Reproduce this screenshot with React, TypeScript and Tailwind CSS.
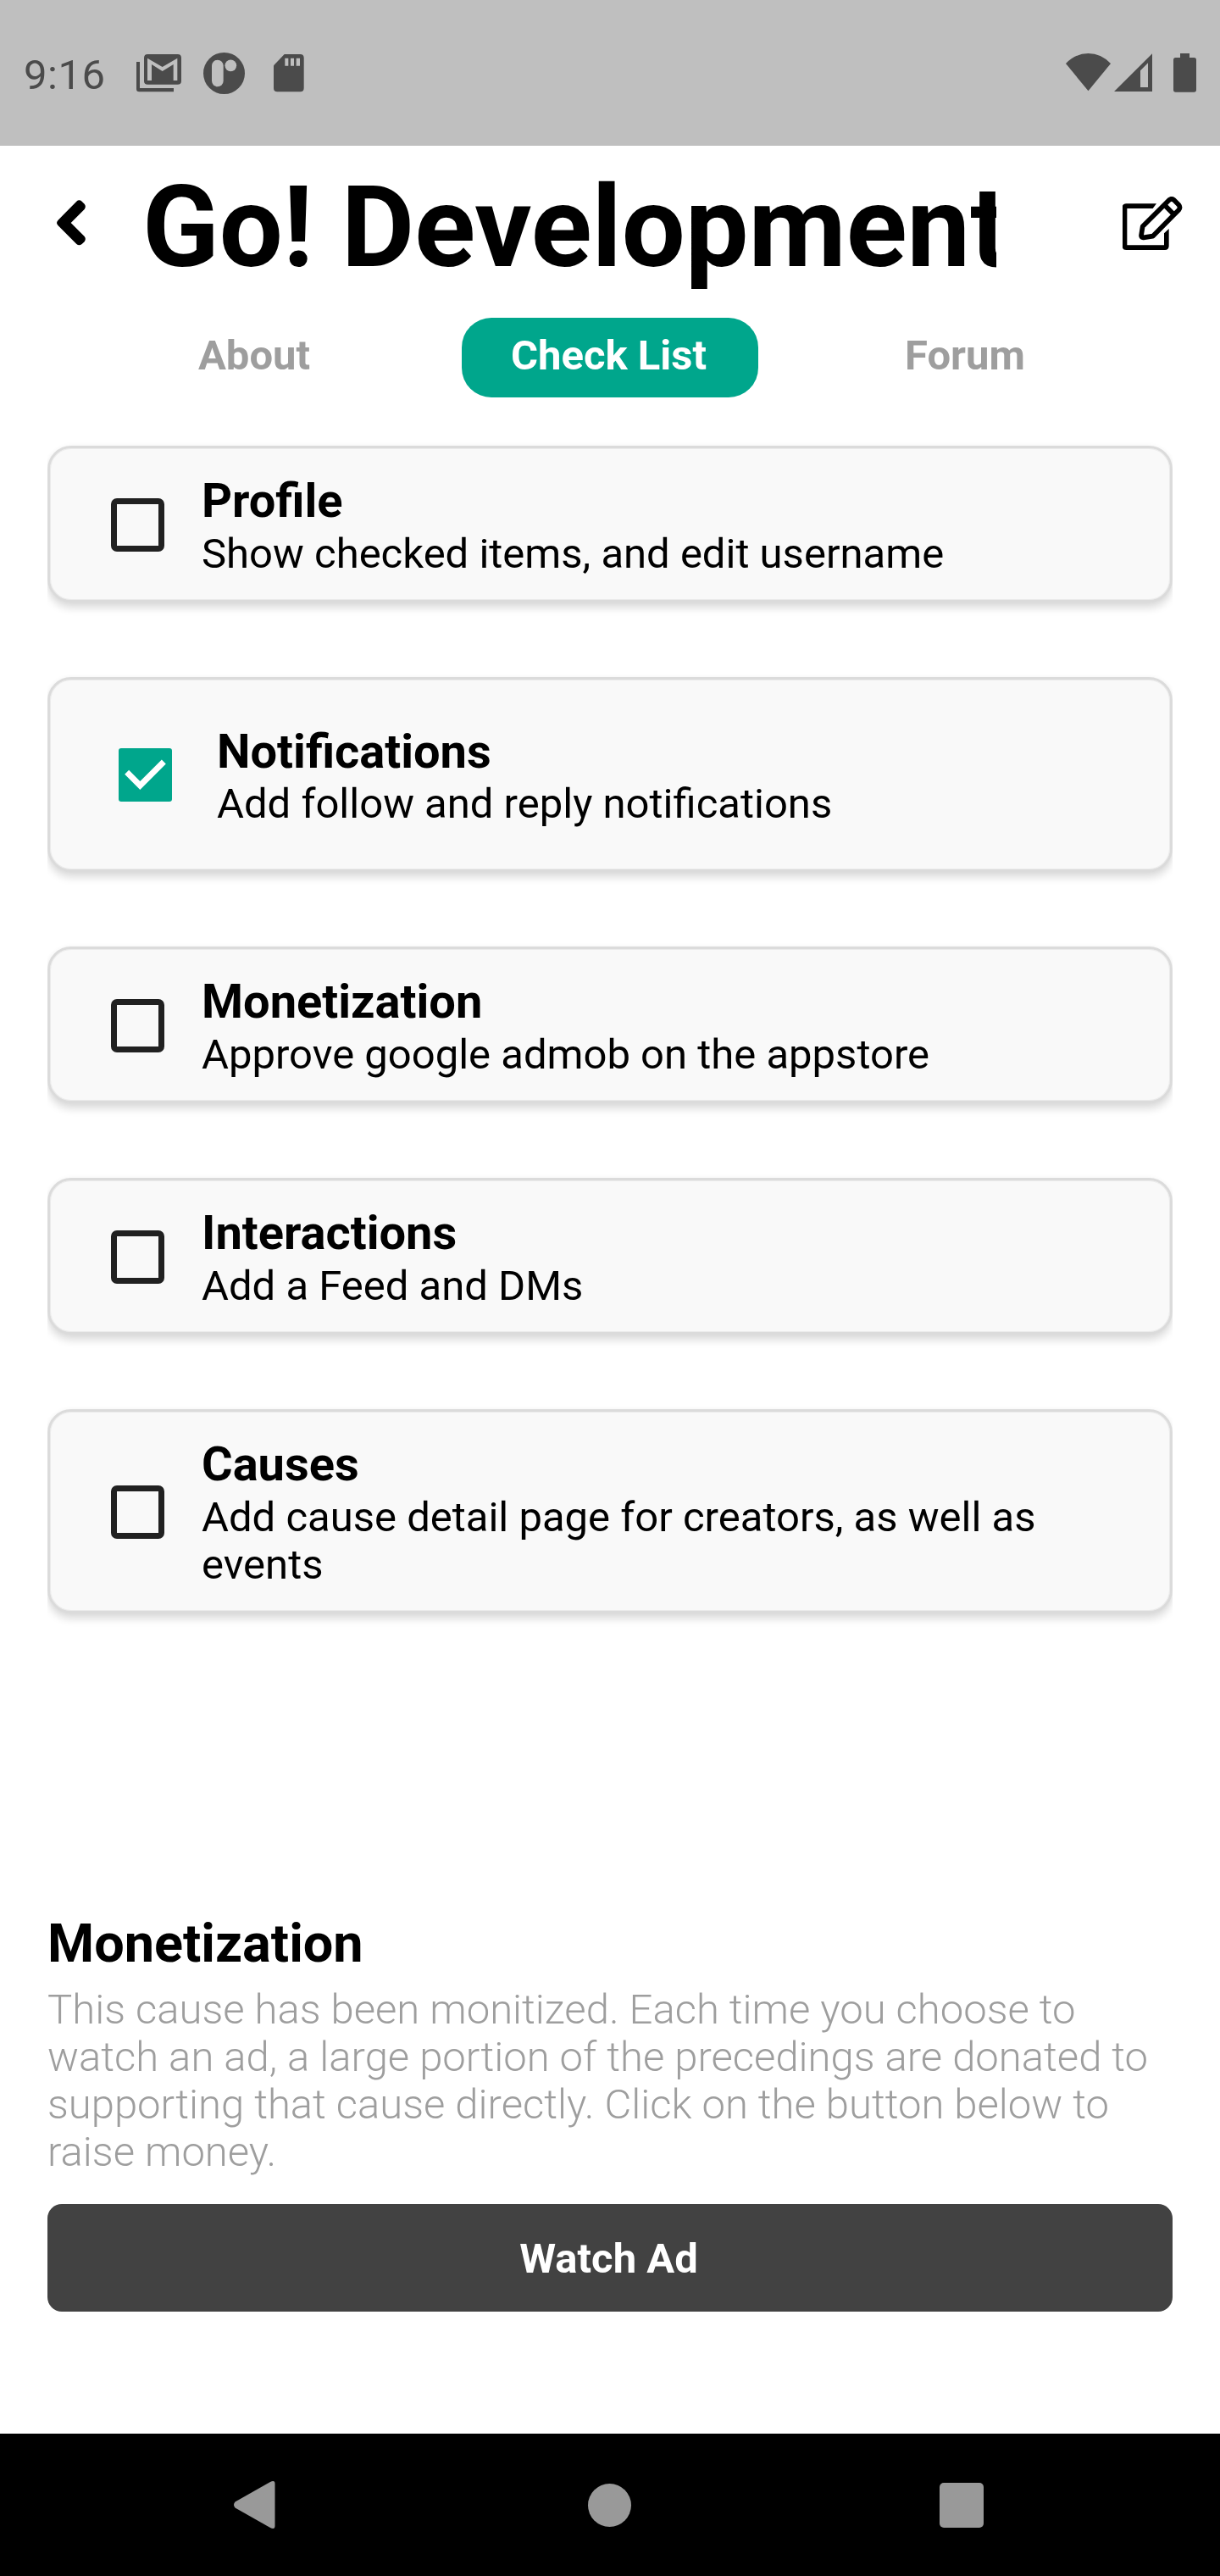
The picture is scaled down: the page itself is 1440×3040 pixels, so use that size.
type Item = { title: string; text: string; checked?: boolean };

const items: Item[] = [
  { title: 'Profile', text: 'Show checked items, and edit username' },
  { title: 'Notifications', text: 'Add follow and reply notifications', checked: true },
  { title: 'Monetization', text: 'Approve google admob on the appstore' },
  { title: 'Interactions', text: 'Add a Feed and DMs' },
  { title: 'Causes', text: 'Add cause detail page for creators, as well as events' },
];

function StatusBar() {
  return (
    <div className="flex h-[172px] items-start justify-between bg-[#bfbfbf] pr-[28px] pl-[28px] pt-[60px] text-[#4b4b4b]">
      <div className="flex items-start">
        <span className="w-[131px] text-[49px] leading-[57px] tracking-[0.5px]">9:16</span>
        <div className="flex pt-[1px]">
          <svg className="mt-[3px] ml-[2px] h-[45px] w-[53px]" viewBox="483 102 159 135" fill="currentColor">
            <path d="M483 129h12v93h120v13H493q-10 0-10-10z" />
            <path fillRule="evenodd" d="M523 102h106q13 0 13 13v82q0 12-13 12H523q-13 0-13-12v-82q0-13 13-13zM522 116v79h15v-57l38 24 39-24v57h14v-79l-53 31z" />
          </svg>
          <svg className="mt-[1px] ml-[26px] h-[49px] w-[49px]" viewBox="720 96 147 147">
            <circle cx="793.5" cy="169.5" r="73.5" fill="currentColor" />
            <rect x="750" y="122" width="41" height="95" rx="20.500" fill="#bfbfbf" />
            <circle cx="817" cy="142" r="20.500" fill="#bfbfbf" />
          </svg>
          <svg className="mt-[3px] ml-[34px] h-[45px] w-[36px]" viewBox="971 102 108 135">
            <path fill="currentColor" d="M1009 102h56q13 0 13 13v107q0 13-13 13h-81q-13 0-13-13v-80z" />
            <path fill="#bfbfbf" d="M1011 116h12v27h-12zM1031 116h12v27h-12zM1051 116h13v27h-13z" />
          </svg>
        </div>
      </div>
      <div className="flex pt-[3px]">
        <svg className="h-[45px] w-[53px]" viewBox="174 99 159 135" fill="currentColor">
          <path d="M174 135Q208 99 253.500 99T333 135L253.500 232z" />
        </svg>
        <svg className="ml-[4px] h-[45px] w-[45px]" viewBox="345 99 135 135" fill="currentColor">
          <path fillRule="evenodd" d="M345 234L480 100v134zM438 160v59h27v-86z" />
        </svg>
        <svg className="ml-[25px] h-[46px] w-[27px]" viewBox="555 99 81 138" fill="currentColor">
          <path d="M579 99h33v15h16q8 0 8 8v106q0 8-8 8h-65q-8 0-8-8V122q0-8 8-8h16z" />
        </svg>
      </div>
    </div>
  );
}

function Header() {
  return (
    <div className="flex h-[203px] items-start">
      <svg className="mt-[64px] ml-[67px] h-[54px] w-[34px]" viewBox="201 620 102 162">
        <path
          d="M201 701Q201 697 206 691L271 625Q280 617 290 625L299 634Q306 643 299 653L251 701L299 749Q306 758 299 768L290 776Q280 784 271 776L206 711Q201 705 201 701z"
          fill="#000"
        />
      </svg>
      <h1 className="mt-[19px] ml-[67px] w-[1008px] overflow-hidden text-[133px] leading-[156px] font-bold whitespace-nowrap">
        Go! Development
      </h1>
      <svg className="mt-[60px] ml-[149px] h-[64px] w-[71px]" viewBox="375 608 213 192" fill="none" stroke="#000">
        <path d="M495 633h-107q-14 0-14 14v136q0 14 14 14h137q14 0 14-14v-61l-17 16v42H391V650h91z" fill="#000" stroke="none" />
        <path d="M446 714L540 620Q548 613 557 620L574 637Q581 646 574 655L482 748L449 753Q441 754 441 746z" strokeWidth="17" strokeLinejoin="round" />
        <path d="M526 640L554 669" strokeWidth="17" />
      </svg>
    </div>
  );
}

function Tabs() {
  return (
    <nav className="mx-[90px] grid h-[94px] grid-cols-3 justify-items-center text-[49px] leading-[57px] font-bold text-[#9e9e9e]">
      <div className="pt-[16px]">About</div>
      <div className="h-[94px] w-[350px] rounded-[35px] bg-[#00a68c] pt-[16px] pr-[3px] text-center text-white">Check List</div>
      <div className="pt-[16px] pr-[2px]">Forum</div>
    </nav>
  );
}

function Checkbox({ checked }: { checked?: boolean }) {
  if (checked) {
    return (
      <svg className="mt-[1px] h-[63px] w-[63px] shrink-0" viewBox="300 309 189 189">
        <rect x="300" y="309" width="189" height="189" rx="9" fill="#00a68c" />
        <path d="M329 394L376 441L460 357" fill="none" stroke="#fff" strokeWidth="21" />
      </svg>
    );
  }
  return <div className="mt-[1px] h-[63px] w-[63px] shrink-0 rounded-[7px] border-[7px] border-[#212121]" />;
}

function Card({ item }: { item: Item }) {
  return (
    <div className="[clip-path:inset(-20px_0_-40px_0)]">
      <div
        className={
          'flex items-center rounded-[28px] border-[3px] border-[#dbdbdb] bg-[#f9f9f9] pr-[60px] shadow-[inset_0_0_0_1px_#ebebeb,0_7px_10px_rgba(0,0,0,0.13),0_0_6px_rgba(0,0,0,0.04)] ' +
          (item.checked ? 'h-[230px] pl-[81px]' : 'pl-[72px]')
        }
      >
        <Checkbox checked={item.checked} />
        <div className={item.checked ? 'ml-[53px] pt-[28px] pb-[26px]' : 'ml-[44px] pt-[29px] pb-[26px]'}>
          <h2 className="text-[56px] leading-[66px] font-bold">{item.title}</h2>
          <p className={item.checked ? 'mt-[1px] text-[49px] leading-[56px]' : 'mt-[2px] text-[49px] leading-[56px]'}>
            {item.text}
          </p>
        </div>
      </div>
    </div>
  );
}

function NavBar() {
  return (
    <div className="flex h-[168px] items-center bg-black">
      <svg className="ml-[276px] h-[56px] w-[49px]" viewBox="0 0 49 56" fill="#999">
        <path d="M1.500 24.500L43 1Q48.500 -1.500 48.500 3V53Q48.500 57.500 43 55L1.500 31.500Q-1.500 28 1.500 24.500z" />
      </svg>
      <div className="ml-[369px] h-[51px] w-[51px] rounded-full bg-[#999]" />
      <div className="ml-[364px] h-[53px] w-[52px] rounded-[5px] bg-[#999]" />
    </div>
  );
}

export default function App() {
  return (
    <div className="flex h-[3040px] w-[1440px] flex-col overflow-hidden bg-white font-['Roboto',sans-serif] text-black">
      <StatusBar />
      <Header />
      <Tabs />
      <main className="mx-[56px] mt-[57px] flex flex-col gap-[88px]">
        {items.map((item) => (
          <Card key={item.title} item={item} />
        ))}
      </main>
      <section className="mx-[56px] mt-auto mb-[144px]">
        <h2 className="text-[63px] leading-[74px] font-bold">Monetization</h2>
        <p className="mt-[13px] text-[49px] leading-[56px] font-light text-[#9e9e9e]">
          This cause has been monitized. Each time you choose to watch an ad, a large portion of the precedings are donated to supporting that cause directly. Click on the button below to raise money.
        </p>
        <button className="mt-[33px] block h-[127px] w-full rounded-[17px] bg-[#424242] pt-[2px] pr-[3px] text-[49px] leading-[57px] font-bold text-white">
          Watch Ad
        </button>
      </section>
      <NavBar />
    </div>
  );
}
